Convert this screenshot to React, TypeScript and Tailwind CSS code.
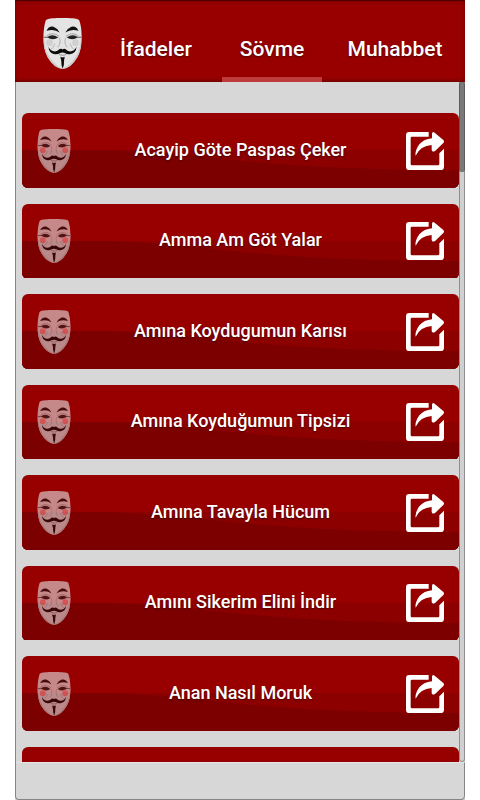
import { useState } from 'react'

const tabs = [
  { label: 'İfadeler', width: 'w-[120px]' },
  { label: 'Sövme', width: 'w-[112px]' },
  { label: 'Muhabbet', width: 'w-[134px]' },
]

const phrases = [
  'Acayip Göte Paspas Çeker',
  'Amma Am Göt Yalar',
  'Amına Koydugumun Karısı',
  'Amına Koyduğumun Tipsizi',
  'Amına Tavayla Hücum',
  'Amını Sikerim Elini İndir',
  'Anan Nasıl Moruk',
  '',
]

function Mask({ className, blush = false }: { className: string; blush?: boolean }): React.JSX.Element {
  const cheek = blush ? '#ff8c8c' : '#d0d0d0'
  return (
    <svg viewBox="0 0 115 151" className={className} fill="none" aria-hidden="true">
      <path
        d="M8 7Q13 2 29 1Q57-2 86 1Q103 2 107 7Q115 29 114 62Q114 94 101 117Q82 149 58 151Q33 149 14 117Q1 94 1 61Q1 28 8 7Z"
        fill="#e4e4e4"
      />
      <path d="M2 50Q3 90 18 114Q37 142 58 150Q33 149 14 117Q0 94 2 50ZM113 50Q112 90 97 114Q78 142 58 150Q82 149 101 117Q115 94 113 50Z" fill="#cccccc" />
      <circle cx="19" cy="73" r="10" fill={cheek} />
      <circle cx="96" cy="73" r="10" fill={cheek} />
      <path d="M48 58Q53 70 48 80L43 87M67 58Q62 70 67 80L72 87M35 76Q31 88 24 93M80 76Q84 88 91 93" stroke="#bababa" strokeWidth="3" />
      <path d="M10 38Q17 23 31 26Q42 30 49 43Q33 31 10 38ZM66 43Q73 30 84 26Q98 23 105 38Q83 31 66 43Z" fill="#111111" />
      <path d="M11 53Q29 40 47 54M68 54Q86 40 104 53" stroke="#a5a5a5" strokeWidth="3" />
      <path d="M2 57H14M101 57H113" stroke="#555555" strokeWidth="3" />
      <path d="M12 57Q27 44 45 58Q28 69 12 57ZM70 58Q88 44 103 57Q87 69 70 58Z" fill="#222222" />
      <path
        d="M16 85Q22 98 35 99Q43 99 49 92Q54 89 58 93Q61 89 66 92Q72 99 80 99Q93 98 99 85Q98 105 79 107Q70 108 66 104Q58 100 49 104Q44 108 35 107Q17 105 16 85Z"
        fill="#0b0b0b"
      />
      <path d="M47 108Q58 112 68 108" stroke="#999999" strokeWidth="3" />
      <path d="M51 115Q58 118 64 115L62 127Q63 139 58 150Q53 139 54 127Z" fill="#0b0b0b" />
    </svg>
  )
}

function ShareIcon(): React.JSX.Element {
  return (
    <svg viewBox="0 0 114 114" className="size-[38px] shrink-0" fill="none" aria-hidden="true">
      <path
        d="M68 0V14H18Q14 14 14 18V96Q14 100 18 100H96Q100 100 100 96V64L114 50V104Q114 114 104 114H10Q0 114 0 104V10Q0 0 10 0Z"
        fill="white"
      />
      <path d="M78 5Q79-3 86 2L112 24Q116 29 112 33L88 56Q79 62 77 54V39Q43 41 29 71Q26 57 40 37Q54 21 78 19Z" fill="white" />
    </svg>
  )
}

function PhraseRow({ text }: { text: string }): React.JSX.Element {
  return (
    <li className="overflow-hidden">
      <button
        type="button"
        aria-label={text ? undefined : 'Paylaş'}
        className="relative flex h-[75px] w-full items-center overflow-hidden rounded-md bg-[#980000] px-[15px] text-white"
      >
        <svg viewBox="0 0 438 75" preserveAspectRatio="none" className="absolute inset-0 h-full w-full" aria-hidden="true">
          <path d="M0 37H438V75H0Z" fill="#8c0000" />
          <path d="M0 37H85C180 39 230 57 438 57V75H0Z" fill="#7c0000" />
        </svg>
        <Mask className="relative h-[44px] w-[34px] shrink-0 opacity-60" blush />
        <span className="relative flex-1 pb-0.5 pl-1 text-center text-lg leading-6 font-medium text-shadow-[0_1px_2px_rgb(0_0_0/0.5)]">
          {text}
        </span>
        <span className="relative">
          <ShareIcon />
        </span>
      </button>
    </li>
  )
}

export default function App(): React.JSX.Element {
  const [active, setActive] = useState('Sövme')

  return (
    <div className="h-screen bg-white px-[15px] font-['Roboto',sans-serif]">
      <div className="flex h-full flex-col overflow-hidden bg-[#d7d7d7]">
        <header className="flex h-[82px] shrink-0 items-stretch border-t border-b border-t-[#500000] border-b-[#700000] bg-[#980000] pr-[7px] pl-7 shadow-[inset_0_0_4px_rgb(0_0_0/0.3)]">
          <Mask className="mt-[17px] mr-[14px] h-[51px] w-[39px] shrink-0" />
          <nav className="flex flex-1 justify-between">
            {tabs.map((tab) => (
              <button
                key={tab.label}
                type="button"
                onClick={() => setActive(tab.label)}
                className={`${tab.width} relative pt-4 text-[21px] leading-6 font-medium text-white text-shadow-[0_1px_2px_rgb(0_0_0/0.5)]`}
              >
                {tab.label}
                {active === tab.label && <span className="absolute inset-x-[6px] -bottom-px h-[5px] bg-[#bd3b3b]" />}
              </button>
            ))}
          </nav>
        </header>
        <div className="flex min-h-0 flex-1 flex-col rounded-b-sm border-b border-l border-[#858585]">
          <main className="flex min-h-0 flex-1">
            <ul className="grid min-w-0 flex-1 grid-rows-[repeat(7,1fr)_15px] gap-4 overflow-hidden pt-[31px] pl-[6px]">
              {phrases.map((text, i) => (
                <PhraseRow key={i} text={text} />
              ))}
            </ul>
            <div className="w-[6px] shrink-0 rounded-b-sm bg-[#d0d0d0] inset-ring inset-ring-[#8f8f8f]">
              <div className="h-[90px] rounded-sm border-x border-[#5c5c5c] bg-[#7a7a7a]" />
            </div>
          </main>
          <footer className="h-[37px] shrink-0 rounded-br-sm border-t border-r border-t-[#e4e4e4] border-r-[#858585]" />
        </div>
      </div>
    </div>
  )
}
